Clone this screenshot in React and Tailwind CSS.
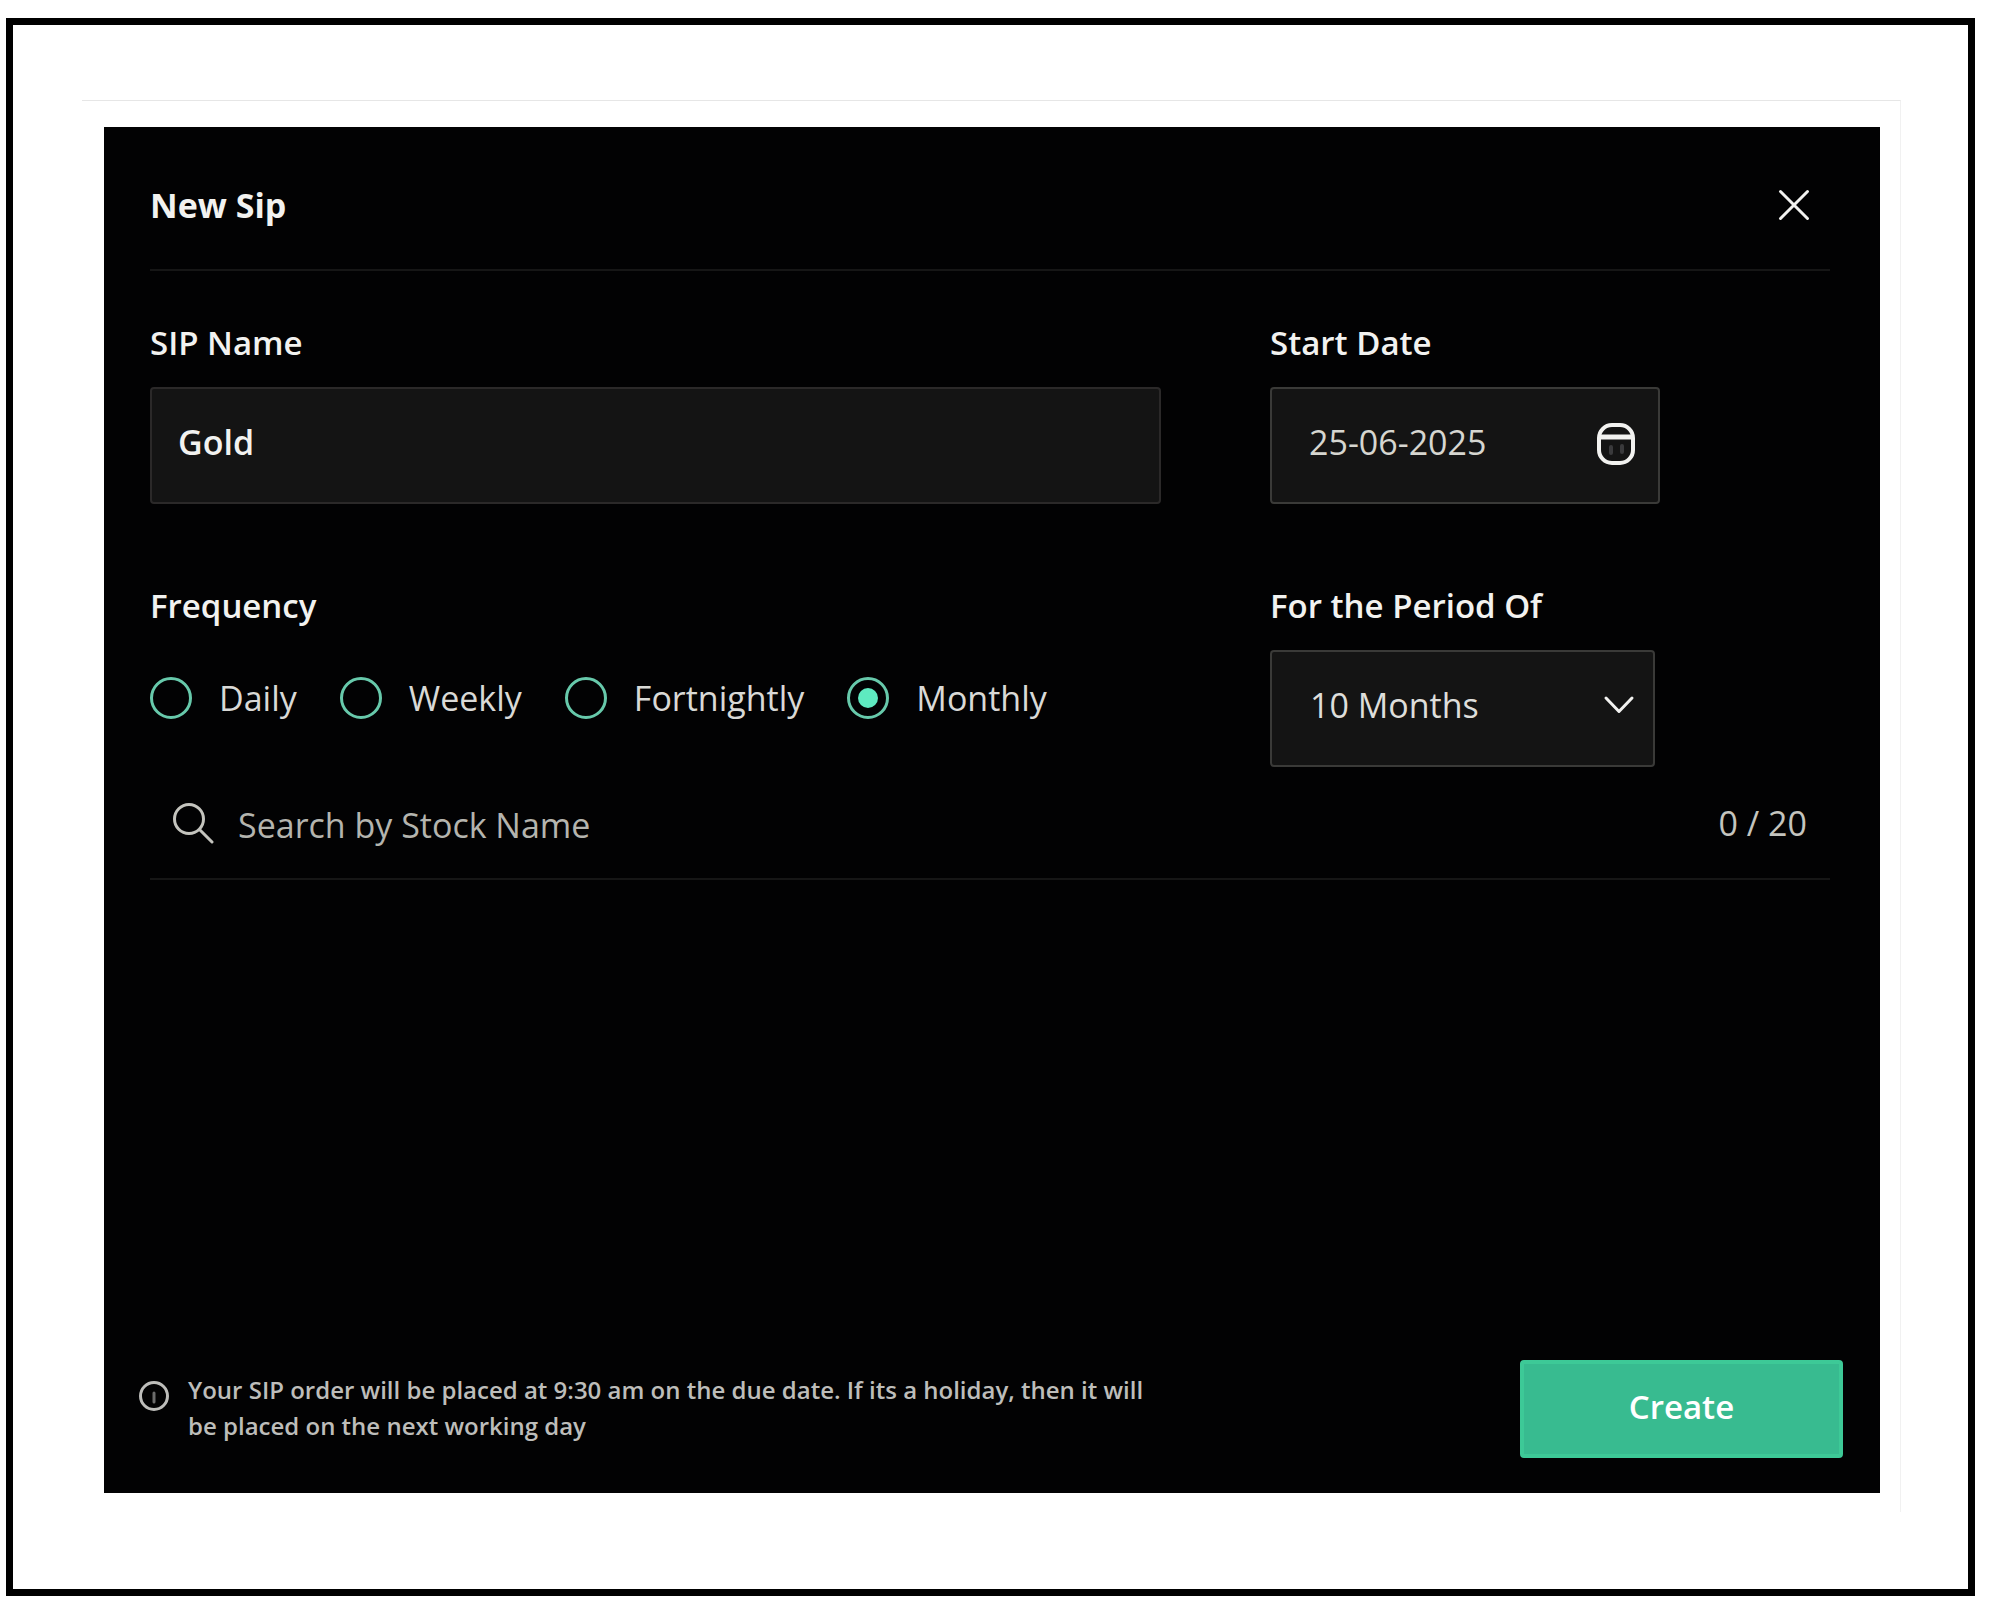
import React, { useState } from 'react';

const FREQUENCIES = ['Daily', 'Weekly', 'Fortnightly', 'Monthly'];
const PERIODS = ['10 Months', '12 Months', '24 Months'];
const MAX_STOCKS = 20;

function CloseIcon() {
  return (
    <svg className="w-8 h-8" viewBox="0 0 32 32" fill="none" stroke="currentColor" strokeWidth="3" strokeLinecap="round">
      <path d="M2.500 2.500 29.500 29.500M29.500 2.500 2.500 29.500" />
    </svg>
  );
}

function CalendarIcon() {
  return (
    <svg className="w-10 h-11" viewBox="0 0 40 44" fill="none" stroke="currentColor">
      <rect x="3" y="3" width="34" height="38" rx="13" strokeWidth="4" />
      <path d="M4 15h32" strokeWidth="5" />
      <path d="M15 25v6M26 24v6" stroke="#3a3a3c" strokeWidth="4" strokeLinecap="round" />
    </svg>
  );
}

function ChevronIcon() {
  return (
    <svg className="w-8 h-5" viewBox="0 0 32 20" fill="none" stroke="currentColor" strokeWidth="3" strokeLinecap="round" strokeLinejoin="round">
      <path d="M3 3 16 16.500 29 3" />
    </svg>
  );
}

function SearchIcon() {
  return (
    <svg className="w-[42px] h-[42px]" viewBox="0 0 42 42" fill="none" stroke="currentColor" strokeWidth="3" strokeLinecap="round">
      <circle cx="17" cy="17" r="14.500" />
      <path d="M28 28 40 40" />
    </svg>
  );
}

function InfoIcon() {
  return (
    <svg className="w-8 h-8 shrink-0" viewBox="0 0 32 32" fill="none" stroke="currentColor">
      <circle cx="16" cy="16" r="13.500" strokeWidth="3" />
      <path d="M16 13v9" stroke="#6b6b6b" strokeWidth="3" strokeLinecap="round" />
    </svg>
  );
}

export default function App() {
  const [name, setName] = useState('Gold');
  const [startDate, setStartDate] = useState('25-06-2025');
  const [frequency, setFrequency] = useState('Monthly');
  const [period, setPeriod] = useState('10 Months');
  const [search, setSearch] = useState('');

  return (
    <div className="min-h-screen flex bg-white pt-[18px] pl-[6px] pr-6 pb-[7px] font-['Open_Sans',sans-serif]">
      <div className="flex-1 flex border-[7px] border-black pt-[75px] pl-[69px] pr-[67px] pb-[77px]">
        <div className="flex-1 flex border-t border-r border-t-[#e6e6e6] border-r-[#f1f1f1] pt-[26px] pl-[22px] pr-5 pb-[19px]">
          <form
            className="flex-1 flex flex-col bg-[#020203] text-[#f2f2f0] text-[34px] leading-10"
            onSubmit={(e) => e.preventDefault()}
          >
            <div className="flex-1 flex flex-col pl-[46px] pr-[50px]">
              <header className="flex items-center justify-between pt-[58px] pb-11 pr-5 border-b-2 border-[#161616]">
                <h1 className="font-bold">New Sip</h1>
                <button type="button" aria-label="Close">
                  <CloseIcon />
                </button>
              </header>

              <div className="grid grid-cols-[1fr_560px] gap-x-[109px] gap-y-[82px] pt-[52px]">
                <div className="flex flex-col gap-6">
                  <label htmlFor="sip-name" className="text-[33px] leading-10 font-semibold">SIP Name</label>
                  <input
                    id="sip-name"
                    value={name}
                    onChange={(e) => setName(e.target.value)}
                    className="w-full h-[117px] px-[26px] pb-2 font-semibold bg-[#141414] border-2 border-[#2b2929] rounded outline-none"
                  />
                </div>

                <div className="flex flex-col gap-6">
                  <label htmlFor="start-date" className="text-[33px] leading-10 font-semibold">Start Date</label>
                  <div className="flex items-center w-[390px] h-[117px] pl-[37px] pr-[22px] bg-[#141414] border-2 border-[#3a3a38] rounded">
                    <input
                      id="start-date"
                      value={startDate}
                      onChange={(e) => setStartDate(e.target.value)}
                      className="flex-1 min-w-0 pb-2 text-[#d6d6d0] bg-transparent outline-none"
                    />
                    <button type="button" aria-label="Pick a date" className="pb-1">
                      <CalendarIcon />
                    </button>
                  </div>
                </div>

                <fieldset>
                  <legend className="text-[33px] leading-10 font-semibold">Frequency</legend>
                  <div className="flex gap-[43px] mt-[51px]">
                    {FREQUENCIES.map((item) => (
                      <label key={item} className="flex items-center gap-[27px] text-[#d9d9d6]">
                        <input
                          type="radio"
                          name="frequency"
                          checked={frequency === item}
                          onChange={() => setFrequency(item)}
                          className="appearance-none shrink-0 w-[42px] h-[42px] p-2 rounded-full border-[3px] border-[#67c9ab] checked:bg-[#5eeac0] bg-clip-content"
                        />
                        {item}
                      </label>
                    ))}
                  </div>
                </fieldset>

                <div className="flex flex-col gap-6">
                  <label htmlFor="period" className="text-[33px] leading-10 font-semibold">For the Period Of</label>
                  <div className="relative w-[385px]">
                    <select
                      id="period"
                      value={period}
                      onChange={(e) => setPeriod(e.target.value)}
                      className="appearance-none w-full h-[117px] pl-[38px] pb-2 text-[#dededb] bg-[#141414] border-2 border-[#3a3a38] rounded outline-none"
                    >
                      {PERIODS.map((item) => (
                        <option key={item}>{item}</option>
                      ))}
                    </select>
                    <span className="absolute right-5 inset-y-0 flex items-center pb-2 pointer-events-none">
                      <ChevronIcon />
                    </span>
                  </div>
                </div>
              </div>

              <div className="flex items-center h-[113px] pl-[22px] pr-[23px] text-[#c4c4be] border-b-2 border-[#161616]">
                <SearchIcon />
                <input
                  type="text"
                  aria-label="Search by Stock Name"
                  placeholder="Search by Stock Name"
                  value={search}
                  onChange={(e) => setSearch(e.target.value)}
                  className="flex-1 h-14 ml-6 pt-1 bg-transparent outline-none placeholder:text-[#b4b4ae]"
                />
                <span>0 / {MAX_STOCKS}</span>
              </div>
            </div>

            <footer className="flex items-start justify-between pl-[34px] pr-[37px] pb-[35px]">
              <div className="flex items-start gap-[18px] pt-3 text-2xl leading-9 text-[#bdbdba]">
                <span className="pt-2">
                  <InfoIcon />
                </span>
                <p className="font-semibold">
                  Your SIP order will be placed at 9:30 am on the due date. If its a holiday, then it will<br />
                  be placed on the next working day
                </p>
              </div>
              <button type="submit" className="shrink-0 w-[323px] h-[98px] pb-1 text-[33px] font-semibold text-white bg-[#38bb90] border-4 border-[#3dc997] rounded">
                Create
              </button>
            </footer>
          </form>
        </div>
      </div>
    </div>
  );
}
